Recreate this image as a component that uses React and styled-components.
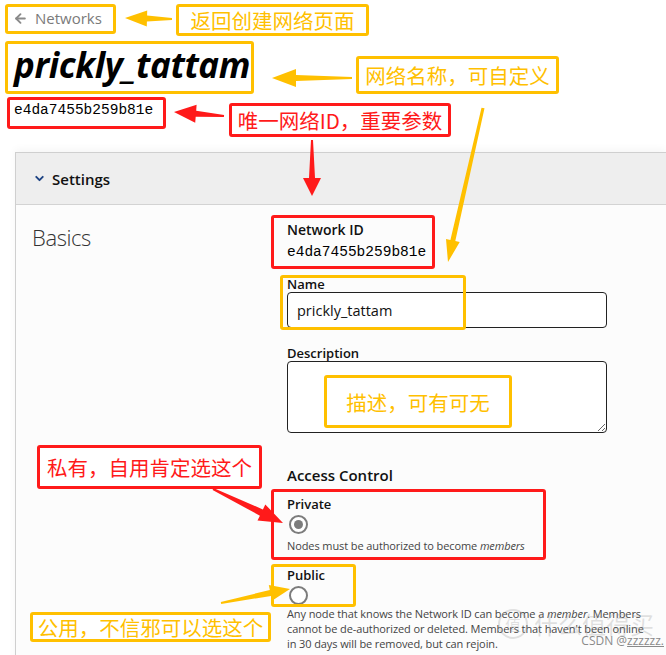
import React from "react";
import styled, { createGlobalStyle } from "styled-components";
import { ArrowLeft, ChevronDown } from "lucide-react";

const YELLOW = "#FFC000";
const RED = "#FF1A1A";
const UI = `"Open Sans", "Noto Sans", sans-serif`;
const CJK = `"Noto Sans CJK SC", "Noto Sans", sans-serif`;
const MONO = `"Liberation Mono", "DejaVu Sans Mono", monospace`;

const GlobalStyle = createGlobalStyle`
    html, body {
        margin: 0;
        background: #ffffff;
        font-family: ${UI};
        color: #111;
    }
    * {
        box-sizing: border-box;
    }
`;

const Page = styled.div`
    position: relative;
    width: 666px;
    height: 655px;
    overflow: hidden;
    padding-top: 8px;
`;

const Header = styled.header`
    padding-left: 14px;
`;

const BackLink = styled.a`
    display: flex;
    align-items: center;
    gap: 7px;
    height: 20px;
    font-size: 15px;
    color: #7a7a7a;
    text-decoration: none;
    svg {
        color: #8a8a8a;
        margin-left: -1px;
    }
`;

const Title = styled.h1`
    margin: 14px 0 0;
    font-size: 35px;
    line-height: 46px;
    font-weight: 700;
    font-style: italic;
    color: #000;
    letter-spacing: -0.4px;
`;

const Mono = styled.div`
    margin-top: ${(p) => p.$top || 0}px;
    font-family: ${MONO};
    font-size: 14.5px;
    line-height: 18px;
    color: #000;
`;

const Panel = styled.section`
    margin: 33px 0 0 15px;
    border: 1px solid #cfcfcf;
    border-right: none;
    background: #fcfcfc;
    height: 600px;
    box-shadow: 0 -3px 8px rgba(0, 0, 0, 0.04);
`;

const PanelHead = styled.div`
    display: flex;
    align-items: center;
    gap: 6px;
    height: 52px;
    padding-left: 17px;
    background: #eeeeee;
    border-bottom: 1px solid #d3d3d3;
    font-size: 15px;
    font-weight: 600;
    svg {
        color: #1d4383;
    }
`;

const PanelBody = styled.div`
    display: grid;
    grid-template-columns: 255px 365px;
    padding: 16px 0 0 16px;
`;

const SectionTitle = styled.h2`
    margin: 0;
    padding-top: 2px;
    font-size: 22px;
    line-height: 28px;
    font-weight: 300;
    color: #333;
    letter-spacing: -0.4px;
`;

const Form = styled.div`
    display: flex;
    flex-direction: column;
`;

const Label = styled.label`
    display: block;
    margin-top: ${(p) => p.$top || 0}px;
    font-size: ${(p) => p.$size || 13}px;
    line-height: ${(p) => p.$lh || 16}px;
    font-weight: 600;
    color: #111;
`;

const TextInput = styled.input`
    width: 320px;
    height: 36px;
    padding: 0 9px;
    border: 1px solid #222;
    border-radius: 4px;
    background: #fff;
    font-family: ${UI};
    font-size: 14.5px;
    color: #111;
`;

const TextArea = styled.textarea`
    display: block;
    width: 320px;
    height: 72px;
    border: 1px solid #222;
    border-radius: 4px;
    background: #fff;
    resize: vertical;
`;

const Radio = styled.span`
    display: block;
    width: 19px;
    height: 19px;
    margin: 3px 0 0 2px;
    border: 2px solid #7c7c7c;
    border-radius: 50%;
    background: #fff;
    position: relative;
    &::after {
        content: "";
        display: ${(p) => (p.$checked ? "block" : "none")};
        position: absolute;
        inset: 3px;
        border-radius: 50%;
        background: #7c7c7c;
    }
`;

const Hint = styled.p`
    margin: ${(p) => p.$top || 4}px 0 0;
    font-size: 11px;
    line-height: 15px;
    color: #444;
    letter-spacing: -0.1px;
`;

/* ---------- annotation overlay ---------- */

const Overlay = styled.div`
    position: absolute;
    inset: 0;
    pointer-events: none;
`;

const Callout = styled.div`
    position: absolute;
    left: ${(p) => p.$x}px;
    top: ${(p) => p.$y}px;
    width: ${(p) => p.$w}px;
    height: ${(p) => p.$h}px;
    border: 3px solid ${(p) => p.$color};
    border-radius: 3px;
    background: ${(p) => (p.$text ? "#fff" : "transparent")};
    display: flex;
    align-items: center;
    justify-content: center;
    font-family: ${CJK};
    font-size: 20.5px;
    color: ${(p) => p.$color};
    white-space: nowrap;
`;

const ArrowLayer = styled.svg`
    position: absolute;
    left: 0;
    top: 0;
`;

const Watermark = styled.div`
    position: absolute;
    right: 2px;
    bottom: 6px;
    font-family: ${UI};
    font-size: 12px;
    color: #8a8a8a;
    span {
        text-decoration: underline;
    }
`;

const Ghost = styled.div`
    position: absolute;
    left: 498px;
    top: 606px;
    display: flex;
    align-items: center;
    gap: 6px;
    font-family: ${CJK};
    font-size: 24px;
    color: rgba(150, 150, 150, 0.28);
    b {
        display: flex;
        align-items: center;
        justify-content: center;
        width: 30px;
        height: 30px;
        border: 2px solid rgba(150, 150, 150, 0.28);
        border-radius: 50%;
        font-size: 16px;
        font-weight: 400;
    }
`;

// tapered block arrow from tail (x1,y1) to tip (x2,y2)
const arrow = (x1, y1, x2, y2, headLen, headW, tailW, neckW) => {
    const dx = x2 - x1;
    const dy = y2 - y1;
    const len = Math.hypot(dx, dy);
    const ux = dx / len;
    const uy = dy / len;
    const nx = -uy;
    const ny = ux;
    const bx = x2 - ux * headLen;
    const by = y2 - uy * headLen;
    const pt = (x, y, w) => `${(x + nx * w).toFixed(1)},${(y + ny * w).toFixed(1)}`;
    return [
        pt(x1, y1, tailW / 2),
        pt(bx, by, neckW / 2),
        pt(bx, by, headW / 2),
        `${x2},${y2}`,
        pt(bx, by, -headW / 2),
        pt(bx, by, -neckW / 2),
        pt(x1, y1, -tailW / 2),
    ].join(" ");
};

const arrows = [
    { c: YELLOW, p: arrow(172, 19, 125, 18, 22, 16, 2, 6) },
    { c: YELLOW, p: arrow(352, 78, 272, 78, 24, 18, 2, 6) },
    { c: RED, p: arrow(224, 116, 174, 112, 22, 18, 2, 6) },
    { c: RED, p: arrow(312, 140, 312, 196, 18, 18, 2, 6) },
    { c: YELLOW, p: arrow(483, 108, 448, 262, 22, 14, 3, 5) },
    { c: RED, p: arrow(213, 489, 283, 523, 24, 18, 2, 7) },
    { c: YELLOW, p: arrow(221, 603, 290, 589, 20, 16, 2, 6) },
];

const callouts = [
    { x: 5, y: 4, w: 111, h: 30, c: YELLOW },
    { x: 176, y: 4, w: 193, h: 32, c: YELLOW, t: "返回创建网络页面" },
    { x: 5, y: 41, w: 249, h: 53, c: YELLOW },
    { x: 356, y: 56, w: 203, h: 38, c: YELLOW, t: "网络名称，可自定义" },
    { x: 7, y: 97, w: 159, h: 32, c: RED },
    { x: 229, y: 103, w: 222, h: 34, c: RED, t: "唯一网络ID，重要参数" },
    { x: 271, y: 215, w: 164, h: 54, c: RED },
    { x: 280, y: 275, w: 186, h: 55, c: YELLOW },
    { x: 324, y: 375, w: 188, h: 53, c: YELLOW, t: "描述，可有可无" },
    { x: 37, y: 445, w: 225, h: 44, c: RED, t: "私有，自用肯定选这个" },
    { x: 271, y: 489, w: 275, h: 71, c: RED },
    { x: 271, y: 564, w: 85, h: 43, c: YELLOW },
    { x: 30, y: 612, w: 241, h: 30, c: YELLOW, t: "公用，不信邪可以选这个" },
];

const Annotations = () => (
    <Overlay>
        <Ghost>
            <b>值</b>什么值得买
        </Ghost>
        {callouts.map((b, i) => (
            <Callout key={i} $x={b.x} $y={b.y} $w={b.w} $h={b.h} $color={b.c} $text={!!b.t}>
                {b.t}
            </Callout>
        ))}
        <ArrowLayer width="666" height="655">
            {arrows.map((a, i) => (
                <polygon key={i} points={a.p} fill={a.c} />
            ))}
        </ArrowLayer>
        <Watermark>
            CSDN @<span>zzzzzz.</span>
        </Watermark>
    </Overlay>
);

const App = () => {
    return (
        <Page>
            <GlobalStyle />
            <Header>
                <BackLink href="#">
                    <ArrowLeft size={15} strokeWidth={3} />
                    Networks
                </BackLink>
                <Title>prickly_tattam</Title>
                <Mono $top={13}>e4da7455b259b81e</Mono>
            </Header>

            <Panel>
                <PanelHead>
                    <ChevronDown size={13} strokeWidth={3.5} />
                    Settings
                </PanelHead>
                <PanelBody>
                    <SectionTitle>Basics</SectionTitle>
                    <Form>
                        <Label $size={14} $lh={18}>Network ID</Label>
                        <Mono $top={4}>e4da7455b259b81e</Mono>

                        <Label $top={15}>Name</Label>
                        <TextInput defaultValue="prickly_tattam" />

                        <Label $top={17}>Description</Label>
                        <TextArea />

                        <Label $top={32} $size={15} $lh={20}>Access Control</Label>

                        <Label $top={11}>Private</Label>
                        <Radio $checked />
                        <Hint>
                            Nodes must be authorized to become <i>members</i>
                        </Hint>

                        <Label $top={14}>Public</Label>
                        <Radio />
                        <Hint $top={1}>
                            Any node that knows the Network ID can become a <i>member</i>. Members
                            cannot be de-authorized or deleted. Members that haven't been online
                            in 30 days will be removed, but can rejoin.
                        </Hint>
                    </Form>
                </PanelBody>
            </Panel>

            <Annotations />
        </Page>
    );
};

export default App;
